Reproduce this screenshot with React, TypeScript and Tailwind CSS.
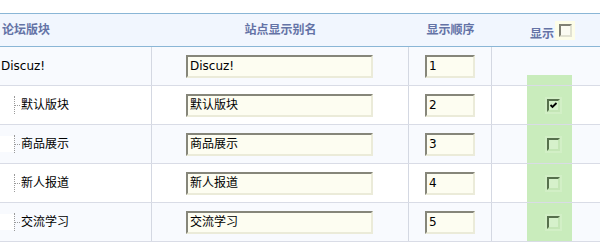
import React from 'react';

const rows = [
  { name: 'Discuz!', order: '1', top: true },
  { name: '默认版块', order: '2', checked: true },
  { name: '商品展示', order: '3' },
  { name: '新人报道', order: '4' },
  { name: '交流学习', order: '5' },
];

const font = { fontFamily: '"DejaVu Sans", "Noto Sans CJK SC", sans-serif' };

function Box({ checked }: { checked?: boolean }) {
  return (
    <span className="flex h-[17px] w-[17px] items-center justify-center bg-[#d2efc6]">
      <span className="relative h-[13px] w-[13px] border-2 border-t-[#56704c] border-l-[#56704c] border-b-[#c4e6b6] border-r-[#c4e6b6] bg-[#d6f1cb]">
        {checked && (
          <svg viewBox="0 0 9 9" className="absolute left-0 top-0 h-[9px] w-[9px]">
            <path d="M1.5 4 L3.5 6 L7.5 2" stroke="#000" strokeWidth="1.8" fill="none" />
          </svg>
        )}
      </span>
    </span>
  );
}

function Input({ value, w }: { value: string; w: string }) {
  return (
    <div
      className={`${w} flex h-[23px] items-center border-2 border-t-[#86867a] border-l-[#86867a] border-b-[#ebebd9] border-r-[#ebebd9] bg-[#fdfdf1] pl-[2px] text-[12px] text-black`}
    >
      {value}
    </div>
  );
}

export default function App() {
  return (
    <div className="h-[245px] w-[600px] overflow-hidden bg-white pt-[13px]" style={font}>
      <div className="flex h-[34px] items-center border-y border-[#8ab6d6] bg-[#f1f6fe] text-[12px] font-bold text-[#6473a6]">
        <div className="w-[152px] pl-[2px]">论坛版块</div>
        <div className="w-[257px] text-center">站点显示别名</div>
        <div className="w-[83px] text-center">显示顺序</div>
        <div className="flex flex-1 items-center pl-[38px] pt-[7px]">
          <span>显示</span>
          <span className="ml-[1px] -mt-[7px] flex h-[19px] w-[20px] items-center justify-center bg-[#fdfde8]">
            <span className="h-[13px] w-[13px] border-2 border-t-[#808074] border-l-[#808074] border-b-[#e2e2d2] border-r-[#e2e2d2] bg-[#fbfbf2]" />
          </span>
        </div>
      </div>
      {rows.map((r, i) => (
        <div
          key={i}
          className={`flex h-[39px] border-b border-[#d9dce6] text-[12px] text-black ${i % 2 === 0 ? 'bg-[#f8fafe]' : 'bg-white'}`}
        >
          <div className="flex w-[152px] items-center border-r border-[#d4d8e2]">
            {r.top ? (
              <span className="pl-[1px]">{r.name}</span>
            ) : (
              <>
                <span className={`h-[16px] w-[14px] ${i % 2 === 0 ? 'bg-white' : ''}`} />
                <span className="flex h-[18px] items-center">
                  <span className="h-full border-l border-dotted border-[#9a9a9a]" />
                  <span className="w-[5px] border-t border-dotted border-[#9a9a9a]" />
                </span>
                <span className="ml-[1px]">{r.name}</span>
              </>
            )}
          </div>
          <div className="flex w-[257px] items-center border-r border-[#d4d8e2] pl-[34px]">
            <Input value={r.name} w="w-[187px]" />
          </div>
          <div className="flex w-[83px] items-center border-r border-[#d4d8e2] pl-[16px]">
            <Input value={r.order} w="w-[50px]" />
          </div>
          <div className="flex flex-1 pl-[35px]">
            {r.top ? (
              <div className="mt-auto h-[10px] w-[45px] bg-[#c9ecbc]" />
            ) : (
              <div className="flex h-full w-[45px] items-center bg-[#c9ecbc] pl-[18px]">
                <Box checked={r.checked} />
              </div>
            )}
          </div>
        </div>
      ))}
    </div>
  );
}
